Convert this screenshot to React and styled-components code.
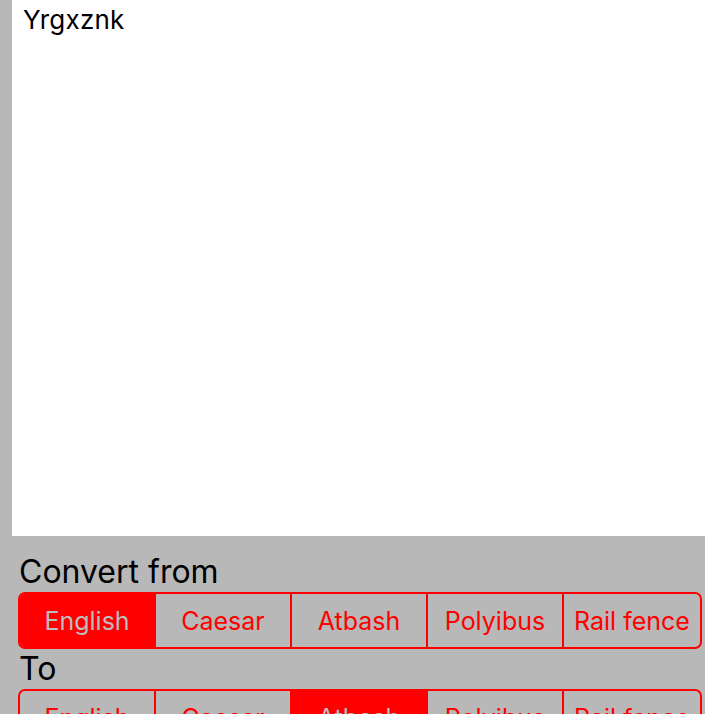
import React, { useState } from 'react';
import styled, { createGlobalStyle } from 'styled-components';

const GlobalStyle = createGlobalStyle`
  * { margin: 0; padding: 0; box-sizing: border-box; }
  html, body {
    width: 100%; height: 100%;
    background: #b8b8b8;
    font-family: Inter, 'Noto Sans', sans-serif;
    overflow: hidden;
  }
`;

const Page = styled.div`
  width: 705px; height: 714px;
  padding-left: 12px;
  display: flex; flex-direction: column;
  background: #b8b8b8;
`;

const Output = styled.div`
  height: 536px; flex-shrink: 0;
  background: #fff; color: #000;
  padding: 4px 11px;
  font-size: 26px; line-height: 32px;
  letter-spacing: 0.2px;
`;

const Controls = styled.div`
  padding: 16px 3px 0 6px;
  display: flex; flex-direction: column;
`;

const Label = styled.div`
  font-size: ${p => p.$size}px;
  line-height: 40px;
  color: #000;
  padding-left: 1px;
`;

const Segmented = styled.div`
  display: grid; grid-template-columns: repeat(5, minmax(0, 1fr));
  height: 57px; flex-shrink: 0;
  border: 2px solid #ff0000; border-radius: 7px;
  overflow: hidden;
`;

const Segment = styled.button`
  display: flex; align-items: center; justify-content: center;
  border: none;
  border-right: ${p => (p.$last ? 'none' : '2px solid #ff0000')};
  background: ${p => (p.$active ? '#ff0000' : 'transparent')};
  color: ${p => (p.$active ? '#bdbdbd' : '#ff0000')};
  font-family: Inter, 'Noto Sans', sans-serif;
  font-size: 25px;
  white-space: nowrap;
  cursor: pointer;
`;

const ciphers = ['English', 'Caesar', 'Atbash', 'Polyibus', 'Rail fence'];

function Picker({ value, onChange }) {
  return (
    <Segmented>
      {ciphers.map((c, i) => (
        <Segment
          key={c}
          $last={i === ciphers.length - 1}
          $active={value === i}
          onClick={() => onChange(i)}
        >
          {c}
        </Segment>
      ))}
    </Segmented>
  );
}

export default function App() {
  const [from, setFrom] = useState(0);
  const [to, setTo] = useState(2);

  return (
    <Page>
      <GlobalStyle />
      <Output>Yrgxznk</Output>
      <Controls>
        <Label $size={32}>Convert from</Label>
        <Picker value={from} onChange={setFrom} />
        <Label $size={32}>To</Label>
        <Picker value={to} onChange={setTo} />
      </Controls>
    </Page>
  );
}
